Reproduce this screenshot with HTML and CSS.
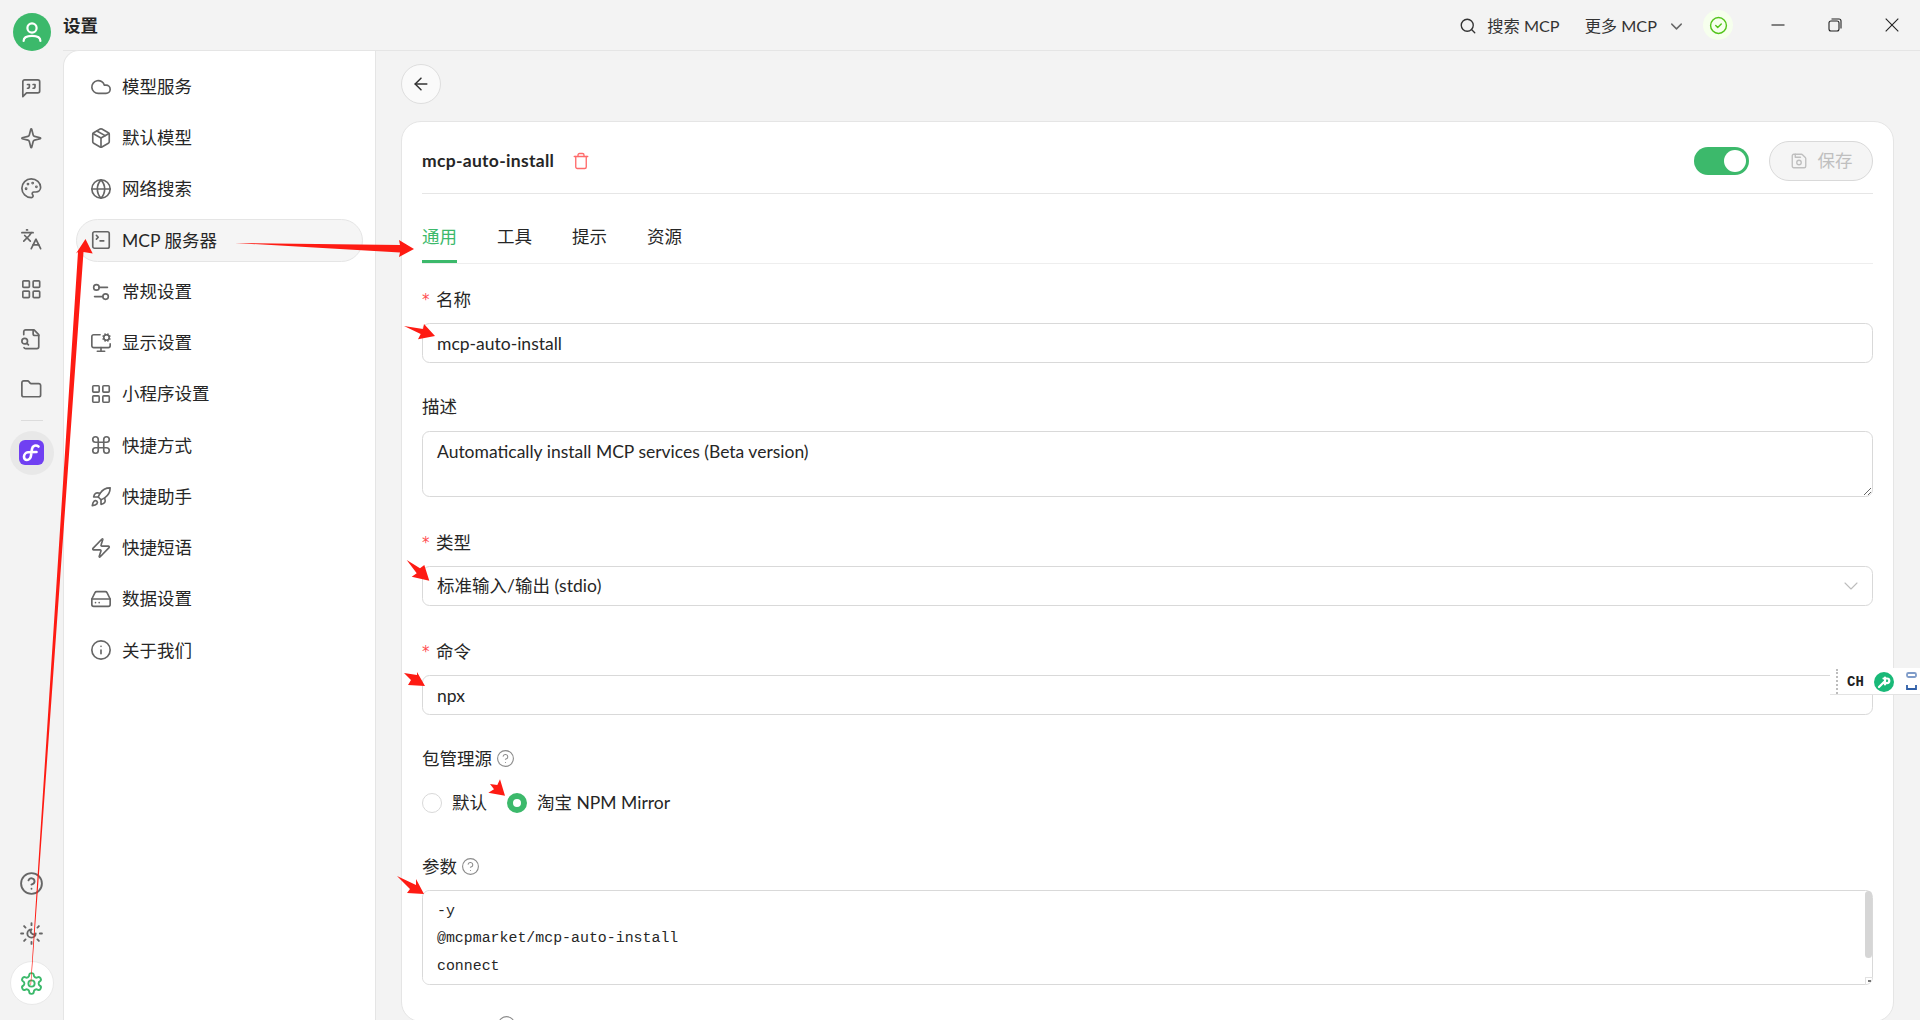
FILE: index.html
```html
<!DOCTYPE html>
<html lang="zh-CN">
<head>
<meta charset="utf-8">
<title>设置</title>
<link rel="stylesheet" href="styles.css">
</head>
<body>
<svg class="sprite" xmlns="http://www.w3.org/2000/svg">
  <symbol id="i-quote" viewBox="0 0 24 24"><path d="M21 15a2 2 0 0 1-2 2H7l-4 4V5a2 2 0 0 1 2-2h14a2 2 0 0 1 2 2z"/><path d="M8 12a2 2 0 0 0 2-2V8H8"/><path d="M14 12a2 2 0 0 0 2-2V8h-2"/></symbol>
  <symbol id="i-sparkle" viewBox="0 0 24 24"><path d="M9.937 15.5A2 2 0 0 0 8.5 14.063l-6.135-1.582a.5.5 0 0 1 0-.962L8.5 9.936A2 2 0 0 0 9.937 8.5l1.582-6.135a.5.5 0 0 1 .963 0L14.063 8.5A2 2 0 0 0 15.5 9.937l6.135 1.581a.5.5 0 0 1 0 .964L15.5 14.063a2 2 0 0 0-1.437 1.437l-1.582 6.135a.5.5 0 0 1-.963 0z"/></symbol>
  <symbol id="i-palette" viewBox="0 0 24 24"><path d="M12 22a1 1 0 0 1 0-20 10 9 0 0 1 10 9 5 5 0 0 1-5 5h-2.25a1.75 1.75 0 0 0-1.4 2.8l.3.4a1.75 1.75 0 0 1-1.4 2.8z"/><circle cx="13.5" cy="6.5" r=".6"/><circle cx="17.5" cy="10.5" r=".6"/><circle cx="6.5" cy="12.5" r=".6"/><circle cx="8.5" cy="7.5" r=".6"/></symbol>
  <symbol id="i-lang" viewBox="0 0 24 24"><path d="m5 8 6 6"/><path d="m4 14 6-6 2-3"/><path d="M2 5h12"/><path d="M7 2h1"/><path d="m22 22-5-10-5 10"/><path d="M14 18h6"/></symbol>
  <symbol id="i-grid" viewBox="0 0 24 24"><rect x="3" y="3" width="7" height="7" rx="1"/><rect x="14" y="3" width="7" height="7" rx="1"/><rect x="14" y="14" width="7" height="7" rx="1"/><rect x="3" y="14" width="7" height="7" rx="1"/></symbol>
  <symbol id="i-filesearch" viewBox="0 0 24 24"><path d="M14 2v4a2 2 0 0 0 2 2h4"/><path d="M4.268 21a2 2 0 0 0 1.727 1H18a2 2 0 0 0 2-2V7l-5-5H6a2 2 0 0 0-2 2v3"/><path d="m9 18-1.5-1.5"/><circle cx="5" cy="14" r="3"/></symbol>
  <symbol id="i-folder" viewBox="0 0 24 24"><path d="M20 20a2 2 0 0 0 2-2V8a2 2 0 0 0-2-2h-7.9a2 2 0 0 1-1.69-.9L9.6 3.9A2 2 0 0 0 7.93 3H4a2 2 0 0 0-2 2v13a2 2 0 0 0 2 2Z"/></symbol>
  <symbol id="i-help" viewBox="0 0 24 24"><circle cx="12" cy="12" r="10"/><path d="M9.09 9a3 3 0 0 1 5.83 1c0 2-3 3-3 3"/><path d="M12 17h.01"/></symbol>
  <symbol id="i-sunmoon" viewBox="0 0 24 24"><path d="M12 8a2.83 2.83 0 0 0 4 4 4 4 0 1 1-4-4"/><path d="M12 2v2"/><path d="M12 20v2"/><path d="m4.9 4.9 1.4 1.4"/><path d="m17.7 17.7 1.4 1.4"/><path d="M2 12h2"/><path d="M20 12h2"/><path d="m6.3 17.7-1.4 1.4"/><path d="m19.1 4.9-1.4 1.4"/></symbol>
  <symbol id="i-gear" viewBox="0 0 24 24"><path d="M12.22 2h-.44a2 2 0 0 0-2 2v.18a2 2 0 0 1-1 1.73l-.43.25a2 2 0 0 1-2 0l-.15-.08a2 2 0 0 0-2.73.73l-.22.38a2 2 0 0 0 .73 2.73l.15.1a2 2 0 0 1 1 1.72v.51a2 2 0 0 1-1 1.74l-.15.09a2 2 0 0 0-.73 2.73l.22.38a2 2 0 0 0 2.73.73l.15-.08a2 2 0 0 1 2 0l.43.25a2 2 0 0 1 1 1.73V20a2 2 0 0 0 2 2h.44a2 2 0 0 0 2-2v-.18a2 2 0 0 1 1-1.73l.43-.25a2 2 0 0 1 2 0l.15.08a2 2 0 0 0 2.73-.73l.22-.39a2 2 0 0 0-.73-2.73l-.15-.08a2 2 0 0 1-1-1.74v-.5a2 2 0 0 1 1-1.74l.15-.09a2 2 0 0 0 .73-2.73l-.22-.38a2 2 0 0 0-2.73-.73l-.15.08a2 2 0 0 1-2 0l-.43-.25a2 2 0 0 1-1-1.73V4a2 2 0 0 0-2-2z"/><circle cx="12" cy="12" r="3"/></symbol>
  <symbol id="i-cloud" viewBox="0 0 24 24"><path d="M17.5 19H9a7 7 0 1 1 6.71-9h1.79a4.5 4.5 0 1 1 0 9Z"/></symbol>
  <symbol id="i-package" viewBox="0 0 24 24"><path d="M11 21.73a2 2 0 0 0 2 0l7-4A2 2 0 0 0 21 16V8a2 2 0 0 0-1-1.73l-7-4a2 2 0 0 0-2 0l-7 4A2 2 0 0 0 3 8v8a2 2 0 0 0 1 1.73z"/><path d="M12 22V12"/><path d="m3.3 7 8.7 5 8.7-5"/><path d="m7.5 4.27 9 5.15"/></symbol>
  <symbol id="i-globe" viewBox="0 0 24 24"><circle cx="12" cy="12" r="10"/><path d="M12 2a14.5 14.5 0 0 0 0 20 14.5 14.5 0 0 0 0-20"/><path d="M2 12h20"/></symbol>
  <symbol id="i-terminal" viewBox="0 0 24 24"><path d="m7 11 2-2-2-2"/><path d="M11 13h4"/><rect x="3" y="3" width="18" height="18" rx="2"/></symbol>
  <symbol id="i-sliders" viewBox="0 0 24 24"><path d="M14 17H5"/><path d="M19 7h-9"/><circle cx="17" cy="17" r="3"/><circle cx="7" cy="7" r="3"/></symbol>
  <symbol id="i-monitor" viewBox="0 0 24 24"><path d="M12 17v4"/><path d="m14.305 7.53.923-.382"/><path d="m15.228 4.852-.923-.383"/><path d="m16.852 3.228-.383-.924"/><path d="m16.852 8.772-.383.923"/><path d="m19.148 3.228.383-.924"/><path d="m19.53 9.696-.382-.924"/><path d="m20.772 4.852.924-.383"/><path d="m20.772 7.148.924.383"/><path d="M22 13v2a2 2 0 0 1-2 2H4a2 2 0 0 1-2-2V5a2 2 0 0 1 2-2h7"/><path d="M8 21h8"/><circle cx="18" cy="6" r="3"/></symbol>
  <symbol id="i-command" viewBox="0 0 24 24"><path d="M15 6v12a3 3 0 1 0 3-3H6a3 3 0 1 0 3 3V6a3 3 0 1 0-3 3h12a3 3 0 1 0-3-3"/></symbol>
  <symbol id="i-rocket" viewBox="0 0 24 24"><path d="M4.5 16.5c-1.5 1.26-2 5-2 5s3.74-.5 5-2c.71-.84.7-2.13-.09-2.91a2.18 2.18 0 0 0-2.91-.09z"/><path d="m12 15-3-3a22 22 0 0 1 2-3.95A12.88 12.88 0 0 1 22 2c0 2.72-.78 7.5-6 11a22.35 22.35 0 0 1-4 2z"/><path d="M9 12H4s.55-3.03 2-4c1.62-1.08 5 0 5 0"/><path d="M12 15v5s3.03-.55 4-2c1.08-1.62 0-5 0-5"/></symbol>
  <symbol id="i-zap" viewBox="0 0 24 24"><path d="M4 14a1 1 0 0 1-.78-1.63l9.9-10.2a.5.5 0 0 1 .86.46l-1.92 6.02A1 1 0 0 0 13 10h7a1 1 0 0 1 .78 1.63l-9.9 10.2a.5.5 0 0 1-.86-.46l1.92-6.02A1 1 0 0 0 11 14z"/></symbol>
  <symbol id="i-drive" viewBox="0 0 24 24"><path d="M22 12H2"/><path d="M5.45 5.11 2 12v6a2 2 0 0 0 2 2h16a2 2 0 0 0 2-2v-6l-3.45-6.89A2 2 0 0 0 16.76 4H7.24a2 2 0 0 0-1.79 1.11z"/><path d="M6 16h.01"/><path d="M10 16h.01"/></symbol>
  <symbol id="i-info" viewBox="0 0 24 24"><circle cx="12" cy="12" r="10"/><path d="M12 16v-4"/><path d="M12 8h.01"/></symbol>
</svg>

<div class="app">
  <aside class="rail">
    <div class="avatar">
      <svg class="avatar-ico" viewBox="0 0 24 24"><circle cx="12" cy="8" r="4.6"/><path d="M3.6 21c0-4 3.4-5.2 8.4-5.2s8.4 1.2 8.4 5.2"/></svg>
    </div>
    <div class="rail-group">
      <div class="rail-btn"><svg class="ico"><use href="#i-quote"/></svg></div>
      <div class="rail-btn"><svg class="ico"><use href="#i-sparkle"/></svg></div>
      <div class="rail-btn"><svg class="ico"><use href="#i-palette"/></svg></div>
      <div class="rail-btn"><svg class="ico"><use href="#i-lang"/></svg></div>
      <div class="rail-btn"><svg class="ico"><use href="#i-grid"/></svg></div>
      <div class="rail-btn"><svg class="ico"><use href="#i-filesearch"/></svg></div>
      <div class="rail-btn"><svg class="ico"><use href="#i-folder"/></svg></div>
    </div>
    <div class="rail-divider"></div>
    <div class="rail-btn rail-btn-app">
      <svg class="logo" viewBox="0 0 25 25"><rect width="25" height="25" rx="6" fill="#7040f2"/><path d="M19.5 6.5C17 4.5 13.5 5.5 13 9l-1 6.5c-.3 2.5-2 4.5-4 4.5s-3-1.500-3-3.200c0-2.300 1.800-4.300 4-4.500l8.500-.3" fill="none" stroke="#fff" stroke-width="2.6" stroke-linecap="round"/></svg>
    </div>
    <div class="rail-bottom">
      <div class="rail-btn"><svg class="ico ico-large"><use href="#i-help"/></svg></div>
      <div class="rail-btn"><svg class="ico ico-large"><use href="#i-sunmoon"/></svg></div>
      <div class="rail-btn rail-btn-active"><svg class="ico ico-large"><use href="#i-gear"/></svg></div>
    </div>
  </aside>

  <div class="shell">
    <header class="titlebar">
      <div class="title">设置</div>
      <div class="top-actions">
        <div class="top-link">
          <svg class="ico top-search" viewBox="0 0 24 24"><circle cx="11" cy="11" r="8"/><path d="m21 21-4.3-4.3"/></svg>
          <span>搜索 MCP</span>
        </div>
        <div class="top-link top-more">
          <span>更多 MCP</span>
          <svg class="ico top-chevron" viewBox="0 0 24 24"><path d="m6 9 6 6 6-6"/></svg>
        </div>
        <div class="status">
          <svg class="ico status-ico" viewBox="0 0 24 24"><circle cx="12" cy="12" r="10"/><path d="m8.500 12 2.500 2.500 4.500-4.500"/></svg>
        </div>
        <div class="win-controls">
          <div class="win-btn"><svg class="win-ico" viewBox="0 0 14 14"><path d="M0.500 7h13"/></svg></div>
          <div class="win-btn"><svg class="win-ico" viewBox="0 0 14 14"><rect x="1" y="3" width="10" height="10" rx="2"/><path d="M3.500 1h7.500a2 2 0 0 1 2 2v7.500"/></svg></div>
          <div class="win-btn"><svg class="win-ico" viewBox="0 0 14 14"><path d="M0.700 0.700l12.600 12.600M13.300 0.700L0.700 13.300"/></svg></div>
        </div>
      </div>
    </header>

    <div class="content">
      <nav class="menu">
        <div class="menu-item"><svg class="ico"><use href="#i-cloud"/></svg><span>模型服务</span></div>
        <div class="menu-item"><svg class="ico"><use href="#i-package"/></svg><span>默认模型</span></div>
        <div class="menu-item"><svg class="ico"><use href="#i-globe"/></svg><span>网络搜索</span></div>
        <div class="menu-item menu-item-active"><svg class="ico"><use href="#i-terminal"/></svg><span>MCP 服务器</span></div>
        <div class="menu-item"><svg class="ico"><use href="#i-sliders"/></svg><span>常规设置</span></div>
        <div class="menu-item"><svg class="ico"><use href="#i-monitor"/></svg><span>显示设置</span></div>
        <div class="menu-item"><svg class="ico"><use href="#i-grid"/></svg><span>小程序设置</span></div>
        <div class="menu-item"><svg class="ico"><use href="#i-command"/></svg><span>快捷方式</span></div>
        <div class="menu-item"><svg class="ico"><use href="#i-rocket"/></svg><span>快捷助手</span></div>
        <div class="menu-item"><svg class="ico"><use href="#i-zap"/></svg><span>快捷短语</span></div>
        <div class="menu-item"><svg class="ico"><use href="#i-drive"/></svg><span>数据设置</span></div>
        <div class="menu-item"><svg class="ico"><use href="#i-info"/></svg><span>关于我们</span></div>
      </nav>

      <main class="main">
        <button class="back" type="button">
          <svg class="ico back-ico" viewBox="0 0 24 24"><path d="m12 19-7-7 7-7"/><path d="M19 12H5"/></svg>
        </button>
        <section class="card">
          <div class="card-head">
            <div class="server-name">mcp-auto-install</div>
            <svg class="ico trash" viewBox="0 0 24 24"><path d="M3 6h18"/><path d="M19 6v14a2 2 0 0 1-2 2H7a2 2 0 0 1-2-2V6"/><path d="M8 6V4a2 2 0 0 1 2-2h4a2 2 0 0 1 2 2v2"/></svg>
            <div class="toggle"><div class="knob"></div></div>
            <button class="save" type="button">
              <svg class="ico save-ico" viewBox="0 0 24 24"><path d="M15.200 3a2 2 0 0 1 1.400.6l3.800 3.800a2 2 0 0 1 .6 1.400V19a2 2 0 0 1-2 2H5a2 2 0 0 1-2-2V5a2 2 0 0 1 2-2z"/><path d="M7 3v4h7"/><circle cx="12" cy="14" r="3"/></svg>
              <span>保存</span>
            </button>
          </div>
          <div class="tabs">
            <div class="tab tab-active">通用</div>
            <div class="tab">工具</div>
            <div class="tab">提示</div>
            <div class="tab">资源</div>
          </div>
          <form class="form">
            <div class="field">
              <label class="label"><span class="req">*</span>名称</label>
              <input class="control" value="mcp-auto-install" readonly>
            </div>
            <div class="field field-desc">
              <label class="label">描述</label>
              <textarea class="control area area-desc" readonly>Automatically install MCP services (Beta version)</textarea>
            </div>
            <div class="field field-select">
              <label class="label"><span class="req">*</span>类型</label>
              <div class="control select">
                <span>标准输入/输出 (stdio)</span>
                <svg class="ico select-arrow" viewBox="0 0 14 14"><path d="M1 4l6 6 6-6"/></svg>
              </div>
            </div>
            <div class="field">
              <label class="label"><span class="req">*</span>命令</label>
              <input class="control" value="npx" readonly>
            </div>
            <div class="field">
              <label class="label">包管理源<svg class="ico hint"><use href="#i-help"/></svg></label>
              <div class="radios">
                <div class="radio-item"><span class="radio"></span><span>默认</span></div>
                <div class="radio-item"><span class="radio radio-on"></span><span>淘宝 NPM Mirror</span></div>
              </div>
            </div>
            <div class="field">
              <label class="label">参数<svg class="ico hint"><use href="#i-help"/></svg></label>
              <div class="args">
                <textarea class="control area area-args" readonly>-y
@mcpmarket/mcp-auto-install
connect</textarea>
                <span class="args-thumb"></span>
                <span class="args-corner"></span>
              </div>
            </div>
          </form>
          <div class="next-hint"><svg class="ico hint"><use href="#i-help"/></svg></div>
        </section>
      </main>
    </div>
  </div>

  <div class="ime">
    <span class="ime-grip"></span>
    <span class="ime-lang">CH</span>
    <svg class="ime-badge" viewBox="0 0 20 20"><circle cx="10" cy="10" r="10" fill="#19b978"/><path d="M5 15l5-5M9.500 6.500h3.500a2.300 2.300 0 0 1 0 4.600h-3M11 5.500v7" fill="none" stroke="#fff" stroke-width="2.200" stroke-linecap="round"/></svg>
    <svg class="ime-shot" viewBox="0 0 14 22"><rect x="2" y="2" width="9" height="4" rx="1.500" fill="none" stroke="#7f9cc9" stroke-width="1.800"/><path d="M2 14v4h9v-4" fill="none" stroke="#2f5fa8" stroke-width="1.800"/></svg>
  </div>

  <svg class="marks" viewBox="0 0 1920 1020" xmlns="http://www.w3.org/2000/svg">
    <polygon points="30.500,985 78,252 76,253.500 85.500,239 92.700,253.500 83.500,252 31,985"/>
    <polygon points="235,243 400,245 399,240 414,249 399,257 400,252.500"/>
    <polygon points="404,326 423,329 424,324 435,336 418,339.300 420.700,334"/>
    <polygon points="406.700,560 420,568.300 424.300,565 429.300,580.700 411.700,576.700 416.700,573.300"/>
    <polygon points="404,673 417,675 417,672 425,686 408,685 411,680"/>
    <polygon points="490,784 497.300,785 500,779.300 505,795.700 488.300,792.700 494,789.300"/>
    <polygon points="397,876 416,885 416,879 424,894 407,893 410,889"/>
  </svg>
</div>
</body>
</html>
```

FILE: styles.css
```css
* { box-sizing: border-box; }
html, body { margin: 0; height: 100%; }
body {
  overflow: hidden;
  background: #f3f3f3;
  color: #262626;
  font-family: Lato, "Noto Sans CJK SC", sans-serif;
  font-size: 17.5px;
  line-height: 27.5px;
}
.sprite { display: none; }
.ico {
  width: 22px;
  height: 22px;
  flex: none;
  fill: none;
  stroke: currentColor;
  stroke-width: 1.8;
  stroke-linecap: round;
  stroke-linejoin: round;
}

.app { position: relative; display: flex; width: 1920px; height: 1020px; overflow: hidden; }

.rail {
  width: 63px;
  flex: none;
  display: flex;
  flex-direction: column;
  align-items: center;
  padding: 13px 0 15px;
  color: #666;
}
.avatar {
  width: 38px;
  height: 38px;
  flex: none;
  border-radius: 50%;
  background: #3cb96b;
  display: flex;
  align-items: center;
  justify-content: center;
}
.avatar-ico { width: 24px; height: 24px; fill: none; stroke: #fff; stroke-width: 2.2; stroke-linecap: round; }
.rail-group { display: flex; flex-direction: column; gap: 6.25px; margin-top: 15px; }
.rail-btn {
  width: 44px;
  height: 44px;
  flex: none;
  display: flex;
  align-items: center;
  justify-content: center;
  border-radius: 50%;
}
.rail-btn .ico { width: 22.5px; height: 22.5px; }
.rail-btn .ico-large { width: 25px; height: 25px; }
.rail-divider { width: 22px; height: 1px; background: #dcdcdc; margin: 8px 0 10px; flex: none; }
.rail-btn-app { background: #e8e8e8; }
.logo { width: 25px; height: 25px; }
.rail-bottom { margin-top: auto; display: flex; flex-direction: column; gap: 6px; }
.rail-btn-active { background: #fff; color: #3cb96b; border: 1px solid #e9e9e9; }

.shell { flex: 1; min-width: 0; display: flex; flex-direction: column; }
.titlebar { height: 50px; flex: none; display: flex; align-items: center; justify-content: space-between; }
.title { font-weight: 700; padding-top: 2px; }
.top-actions { display: flex; align-items: center; font-size: 16.25px; color: #333; }
.top-link { display: flex; align-items: center; padding-top: 2px; }
.top-search { width: 18px; height: 18px; margin-right: 10px; }
.top-more { margin-left: 25px; }
.top-chevron { width: 19px; height: 19px; margin-left: 10px; color: #666; }
.status {
  width: 30px;
  height: 30px;
  margin-left: 17px;
  border-radius: 50%;
  background: #f6ffed;
  display: flex;
  align-items: center;
  justify-content: center;
}
.status-ico { width: 19px; height: 19px; color: #52c41a; }
.win-controls { display: flex; margin-left: 16px; }
.win-btn { width: 57px; height: 50px; display: flex; align-items: center; justify-content: center; }
.win-ico { width: 14px; height: 14px; fill: none; stroke: #222; stroke-width: 1.1; }

.content { flex: 1; min-height: 0; display: flex; border-top: 1px solid #e5e5e5; }
.menu {
  width: 313px;
  flex: none;
  margin-top: -1px;
  background: #fff;
  border: 1px solid #e5e5e5;
  border-bottom: 0;
  border-top-left-radius: 16px;
  padding: 13.75px 12px;
  display: flex;
  flex-direction: column;
  gap: 7.5px;
}
.menu-item {
  height: 43.75px;
  flex: none;
  display: flex;
  align-items: center;
  gap: 10px;
  padding-left: 13px;
  border: 1px solid transparent;
  border-radius: 22px;
}
.menu-item .ico { color: #666; }
.menu-item-active { background: #f5f5f5; border-color: #e5e5e5; }

.main { flex: 1; min-width: 0; padding: 13px 26px 0 25px; overflow: hidden; }
.back {
  display: flex;
  align-items: center;
  justify-content: center;
  width: 40px;
  height: 40px;
  padding: 0;
  border: 1px solid #dedede;
  border-radius: 50%;
  background: #fafafa;
  color: #333;
}
.back-ico { width: 20px; height: 20px; }
.card {
  margin-top: 16.5px;
  background: #fff;
  border: 1px solid #e5e5e5;
  border-radius: 20px;
  padding: 20px 20px 0;
}
.card-head {
  display: flex;
  align-items: center;
  height: 52px;
  padding-bottom: 12px;
  border-bottom: 1px solid #e6e6e6;
}
.server-name { font-weight: 700; letter-spacing: 0.3px; }
.trash { width: 18px; height: 18px; margin-left: 18px; color: #ff6b6b; }
.toggle {
  margin-left: auto;
  width: 55px;
  height: 28px;
  border-radius: 14px;
  background: #3cb96b;
  display: flex;
  align-items: center;
  justify-content: flex-end;
  padding-right: 3px;
}
.knob { width: 22px; height: 22px; border-radius: 50%; background: #fff; }
.save {
  margin-left: 20px;
  width: 104px;
  height: 40px;
  display: flex;
  align-items: center;
  justify-content: center;
  gap: 10px;
  border: 1px solid #d9d9d9;
  border-radius: 20px;
  background: #f5f5f5;
  color: #bfbfbf;
  font: inherit;
}
.save-ico { width: 18px; height: 18px; }

.tabs { display: flex; gap: 40px; height: 70px; border-bottom: 1px solid #eee; margin-bottom: 22px; padding-top: 29px; }
.tab { height: 40px; border-bottom: 3px solid transparent; }
.tab-active { color: #3cb96b; border-bottom-color: #3cb96b; }

.field { margin-bottom: 30px; }
.field-desc { padding-bottom: 2px; }
.field-select { margin-bottom: 31.5px; }
.label { display: flex; align-items: center; height: 37.5px; padding-bottom: 10px; }
.req { color: #ff4d4f; width: 14px; font-family: "DejaVu Sans", sans-serif; font-size: 15px; font-weight: 400; padding-top: 3px; }
.hint { width: 19px; height: 19px; margin-left: 4px; color: #8c8c8c; stroke-width: 1.4; }
.control {
  display: block;
  width: 100%;
  height: 40px;
  padding: 0 14px;
  border: 1px solid #d9d9d9;
  border-radius: 7.5px;
  background: #fff;
  color: #262626;
  font: inherit;
  outline: 0;
}
.area { resize: vertical; padding-top: 6.5px; padding-bottom: 6.5px; line-height: 27.5px; }
.area-desc { height: 66px; }
.args { position: relative; }
.area-args {
  height: 94.5px;
  padding-top: 6.5px;
  font-family: "Liberation Mono", monospace;
  font-size: 14.9px;
  line-height: 27.5px;
  resize: none;
}
.args-thumb {
  position: absolute;
  right: 1px;
  top: 1px;
  width: 7px;
  height: 67px;
  border-radius: 4px;
  background: #d6d6d6;
}
.args-corner {
  position: absolute;
  right: 1px;
  bottom: 1px;
  width: 7px;
  height: 7px;
  border-left: 1px solid #e2e2e2;
  border-top: 1px solid #e2e2e2;
  background: linear-gradient(#777, #777) center / 3px 2px no-repeat;
}
.next-hint { display: flex; height: 6px; overflow: hidden; margin-top: 4.5px; padding-left: 71px; }
.next-hint .hint { margin-left: 4px; }
.select { display: flex; align-items: center; justify-content: space-between; }
.select-arrow { width: 14px; height: 14px; color: #bdbdbd; stroke-width: 1.1; margin-right: 0; }

.radios { display: flex; align-items: center; height: 40px; gap: 20px; }
.radio-item { display: flex; align-items: center; gap: 10px; }
.radio { width: 20px; height: 20px; border-radius: 50%; border: 1px solid #d9d9d9; background: #fff; flex: none; }
.radio-on { border: 6px solid #3cb96b; }

.ime {
  position: absolute;
  left: 1830px;
  top: 668px;
  width: 90px;
  height: 27px;
  display: flex;
  align-items: center;
  padding-top: 1px;
  background: #fff;
  border-bottom: 1px solid #e3e3e3;
}
.ime-grip { width: 0; height: 25px; margin-left: 6px; border-left: 2px dotted #bdbdbd; }
.ime-lang { margin-left: 9px; padding-top: 2px; font-family: "Liberation Mono", monospace; font-weight: 700; font-size: 14px; color: #222; }
.ime-badge { width: 20px; height: 20px; margin-left: 10px; }
.ime-shot { width: 14px; height: 22px; margin-left: 11px; }

.marks { position: absolute; left: 0; top: 0; width: 1920px; height: 1020px; pointer-events: none; fill: #fe1b13; }
```
